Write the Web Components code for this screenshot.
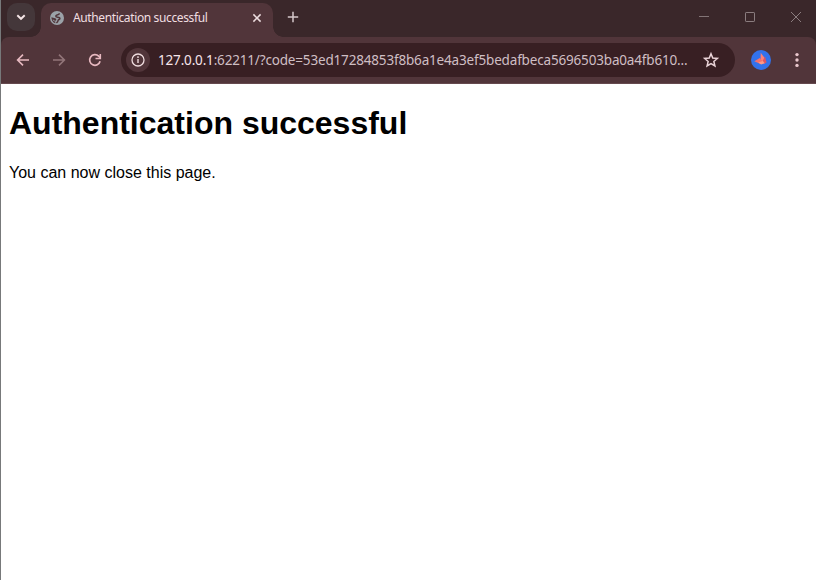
<!DOCTYPE html>
<html lang="en">
<head>
<meta charset="utf-8">
<title>Authentication successful</title>
<style>
html,body{margin:0;height:100%;overflow:hidden;background:#fff}
</style>
</head>
<body>
<browser-window>
  <tab-strip slot="tabs"><browser-tab>Authentication successful</browser-tab></tab-strip>
  <browser-toolbar slot="toolbar"><address-bar><span slot="host">127.0.0.1</span>:62211/?code=53ed17284853f8b6a1e4a3ef5bedafbeca5696503ba0a4fb610...</address-bar></browser-toolbar>
  <page-content><span slot="title">Authentication successful</span>You can now close this page.</page-content>
</browser-window>
<script>
function define(name, html) {
  const template = document.createElement('template');
  template.innerHTML = html;
  customElements.define(name, class extends HTMLElement {
    constructor() {
      super();
      this.attachShadow({ mode: 'open' }).append(template.content.cloneNode(true));
    }
  });
}

define('browser-window', `
<style>
:host{display:flex;flex-direction:column;box-sizing:border-box;height:100vh;border-left:1px solid #77797a;background:#fff}
.frame{background:#3a272a}
</style>
<div class="frame"><slot name="tabs"></slot><slot name="toolbar"></slot></div>
<slot></slot>`);

define('tab-strip', `
<style>
:host{display:flex;height:37px;box-sizing:border-box;padding:3px 0 0 6px;align-items:flex-start}
.search{width:28px;height:28px;border-radius:10px;background:#44373a;margin-right:6px}
.new{width:20px;height:28px;margin-left:10px}
.controls{display:flex;margin-left:auto}
.controls svg{width:46px;height:28px}
svg{display:block;fill:none}
</style>
<svg class="search" viewBox="0 0 28 28"><path d="M10.3 12.2 14 15.8l3.7-3.6" stroke="#f4e5e6" stroke-width="1.9"/></svg>
<slot></slot>
<svg class="new" viewBox="0 0 20 28"><path d="M4.8 14h10.4M10 8.8v10.4" stroke="#d5c8ca" stroke-width="1.5"/></svg>
<div class="controls">
<svg viewBox="0 0 46 28"><path d="M18 13.5h10" stroke="#827476"/></svg>
<svg viewBox="0 0 46 28"><rect x="18.5" y="9.5" width="9" height="9" rx=".6" stroke="#8b7d7f"/></svg>
<svg viewBox="0 0 46 28" style="margin-right:-3px"><path d="M18 9l10 10M28 9 18 19" stroke="#8b7d7f"/></svg>
</div>`);

define('browser-tab', `
<style>
:host{position:relative;display:flex;align-items:center;box-sizing:border-box;width:232px;height:34px;padding:0 9px 5px;border-radius:10px 10px 0 0;background:#51353a;color:#f0dfe1;font:12px/20px "Noto Sans","Open Sans",sans-serif}
:host::before,:host::after{content:"";position:absolute;bottom:0;width:10px;height:10px}
:host::before{left:-10px;background:radial-gradient(circle at 0 0,transparent 9.5px,#51353a 10px)}
:host::after{right:-10px;background:radial-gradient(circle at 100% 0,transparent 9.5px,#51353a 10px)}
.globe{width:14px;height:14px;margin-right:9px}
.label{white-space:nowrap;letter-spacing:-.37px}
.close{width:14px;height:14px;margin-left:auto}
</style>
<svg class="globe" viewBox="0 0 14 14"><circle cx="7" cy="7" r="7" fill="#9ba2a8"/><path d="M9.300 2.200C9.300 4 8.500 3.600 7 3.900 5.500 4.200 5.400 6 6.900 6.100c1.400.1 3-.1 3 1.300 0 1.300-1.700.8-1.900 2.300-.1 1-.8 1.700-1.600 2.300" fill="none" stroke="#51353a" stroke-width="1.500"/><path d="M1.400 6.200 5 7.300q1.600.2 1.300 1.800L5.100 10l.3 2.300Q1.400 10.800 1.400 6.200Z" fill="#51353a"/><path d="m2.600 8.200 2 1.300v1.300Q3.200 9.900 2.600 8.200Z" fill="#9ba2a8"/></svg>
<span class="label"><slot></slot></span>
<svg class="close" viewBox="0 0 14 14"><path d="m3.400 3.400 7.200 7.200m0-7.200-7.200 7.200" stroke="#eddddf" stroke-width="1.5"/></svg>`);

define('browser-toolbar', `
<style>
:host{display:flex;align-items:center;box-sizing:border-box;height:47px;border-bottom:1px solid #65494e;border-radius:8px 8px 0 0;background:#51353a;padding-left:12px}
svg{display:block;width:20px;height:20px;fill:none;flex:none}
.nav{margin-right:16px}
.avatar,.menu{margin-left:16px}
</style>
<svg class="nav" viewBox="0 0 20 20"><path d="M16 10H5M10 4.6 4.6 10 10 15.4" stroke="#e7b9c0" stroke-width="1.6"/></svg>
<svg class="nav" viewBox="0 0 20 20"><path d="M4 10h11M10 4.6 15.4 10 10 15.4" stroke="#927579" stroke-width="1.6"/></svg>
<svg class="nav" viewBox="0 0 20 20"><path d="M15.1 11.3A5.3 5.3 0 1 1 13.7 6.2L15.2 7.7" stroke="#e7b9c0" stroke-width="1.7"/><path d="M15.3 4v4.5h-4.8" stroke="#e7b9c0" stroke-width="1.6"/></svg>
<slot></slot>
<svg class="avatar" viewBox="0 0 20 20"><circle cx="10" cy="10" r="10" fill="#3272eb"/><path d="M9.700 2.800 13.600 8l-.4 5.500L9.600 10.500Z" fill="#ff8175"/><path d="M3.300 11.300 8.800 8l4.200 4.800-3.500 1.300Z" fill="#f4716d"/><path d="m14 6.300 1.600 6.300-2.400 1.200-1.400-3Z" fill="#dc5562"/><path d="m7.300 12.400 4.500-1.300 1.900 2.200-3.600 1.300Z" fill="#ff9a86"/></svg>
<svg class="menu" viewBox="0 0 20 20"><g fill="#e9c7cc"><circle cx="10" cy="4.6" r="1.7"/><circle cx="10" cy="10" r="1.7"/><circle cx="10" cy="15.4" r="1.7"/></g></svg>`);

define('address-bar', `
<style>
:host{display:flex;align-items:center;box-sizing:border-box;width:614px;height:34px;border-radius:17px;background:#381f23;padding:0 14px 0 5px;color:#cfbec3;font:13.5px/22px "Noto Sans","Open Sans",sans-serif}
.info{width:24px;height:24px;border-radius:50%;background:#51353a;margin-right:8px}
.url{white-space:nowrap;letter-spacing:-.17px}
.host{color:#f6e5ea}
.star{width:20px;height:20px;margin-left:auto}
svg{display:block;flex:none;fill:none}
</style>
<svg class="info" viewBox="0 0 24 24"><circle cx="12" cy="12" r="6" stroke="#efdddf" stroke-width="1.3"/><path d="M12 11v4M12 8.3v1.6" stroke="#efdddf" stroke-width="1.4"/></svg>
<span class="url"><span class="host"><slot name="host"></slot></span><slot></slot></span>
<svg class="star" viewBox="0 0 20 20"><path d="m10 3.8 1.75 4.25 4.6.4-3.5 3 1.05 4.5L10 13.55 6.1 15.95l1.05-4.5-3.5-3 4.6-.4Z" stroke="#ead4d8" stroke-width="1.5"/></svg>`);

define('page-content', `
<style>
:host{display:flow-root;flex:1;padding:0 8px;color:#000;font:16px "Liberation Sans",Arial,sans-serif}
h1{font-size:32px;line-height:37px;margin:21px 0}
p{margin:0;line-height:20px}
</style>
<h1><slot name="title"></slot></h1><p><slot></slot></p>`);
</script>
</body>
</html>
